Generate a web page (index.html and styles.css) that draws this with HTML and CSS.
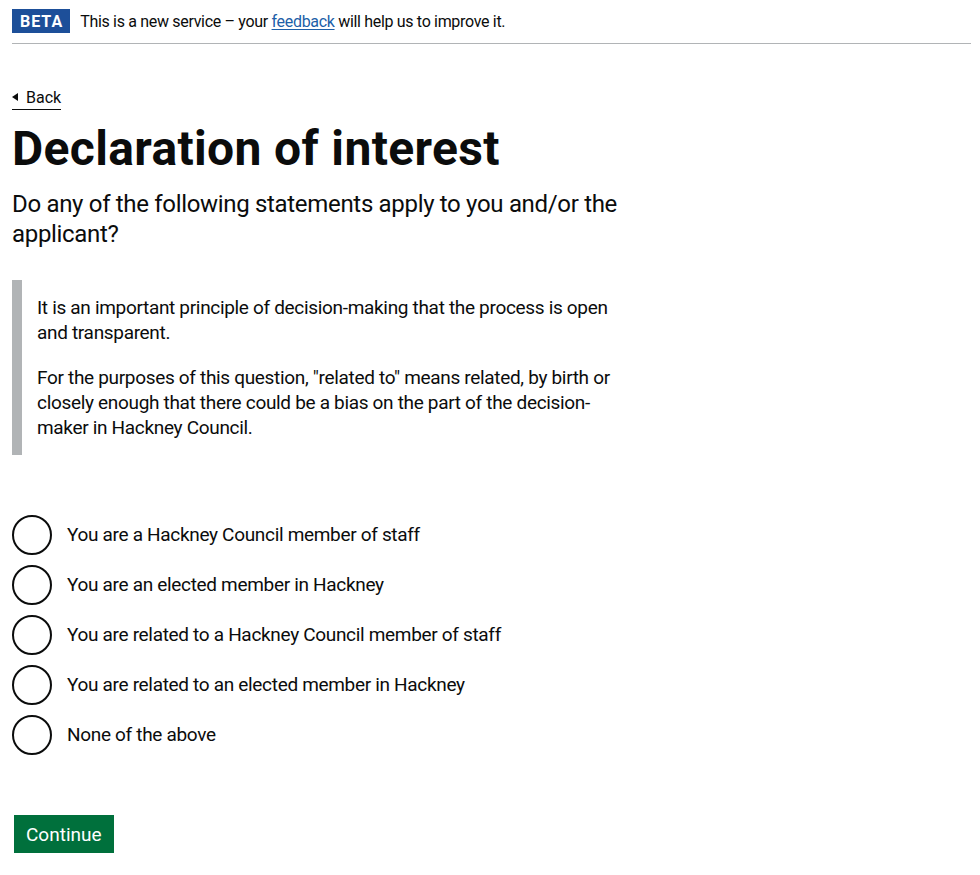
FILE: index.html
```html
<!DOCTYPE html>
<html lang="en">
<head>
<meta charset="utf-8">
<title>Declaration of interest</title>
<link rel="stylesheet" href="styles.css">
</head>
<body>
<div class="width-container">
  <div class="phase-banner">
    <strong class="tag">Beta</strong>
    <span class="phase-text">This is a new service – your <a href="#" class="link">feedback</a> will help us to improve it.</span>
  </div>
  <main class="main">
    <div class="back-row">
      <a href="#" class="back-link">Back</a>
    </div>
    <form class="form">
      <h1 class="heading-xl">Declaration of interest</h1>
      <p class="lead">Do any of the following statements apply to you and/or the applicant?</p>
      <div class="inset">
        <p class="body">It is an important principle of decision-making that the process is open and transparent.</p>
        <p class="body">For the purposes of this question, "related to" means related, by birth or closely enough that there could be a bias on the part of the decision-maker in Hackney Council.</p>
      </div>
      <div class="radios" role="radiogroup" aria-label="Declaration of interest">
        <div class="radio-item">
          <input class="radio-input" id="r1" name="declaration" type="radio">
          <label class="radio-label" for="r1">You are a Hackney Council member of staff</label>
        </div>
        <div class="radio-item">
          <input class="radio-input" id="r2" name="declaration" type="radio">
          <label class="radio-label" for="r2">You are an elected member in Hackney</label>
        </div>
        <div class="radio-item">
          <input class="radio-input" id="r3" name="declaration" type="radio">
          <label class="radio-label" for="r3">You are related to a Hackney Council member of staff</label>
        </div>
        <div class="radio-item">
          <input class="radio-input" id="r4" name="declaration" type="radio">
          <label class="radio-label" for="r4">You are related to an elected member in Hackney</label>
        </div>
        <div class="radio-item">
          <input class="radio-input" id="r5" name="declaration" type="radio">
          <label class="radio-label" for="r5">None of the above</label>
        </div>
      </div>
      <div class="button-row">
        <button type="button" class="button">Continue</button>
      </div>
    </form>
  </main>
</div>
</body>
</html>
```

FILE: styles.css
```css
html, body {
  margin: 0;
  padding: 0;
  background: #ffffff;
}

body {
  font-family: Roboto, "Liberation Sans", Arial, sans-serif;
  color: #0b0c0c;
  letter-spacing: -0.02em;
}

.width-container {
  margin: 0 9px 0 12px;
}

.phase-banner {
  display: flex;
  align-items: center;
  padding: 9px 0 10px;
  border-bottom: 1px solid #b1b4b6;
}

.tag {
  display: inline-block;
  padding: 3px 7px 1px 8px;
  margin-right: 10px;
  background: #1d4f99;
  color: #ffffff;
  font-size: 16px;
  line-height: 20px;
  font-weight: 700;
  letter-spacing: 1px;
  text-transform: uppercase;
}

.phase-text {
  font-size: 16px;
  line-height: 20px;
  padding-top: 2px;
}

.link {
  color: #1d5fa8;
  text-decoration: underline;
  text-underline-offset: 2px;
}

.main {
  padding-top: 44px;
}

.back-row {
  display: flex;
  margin-bottom: 14px;
}

.back-link {
  position: relative;
  padding: 0 0 1px 14px;
  font-size: 16px;
  line-height: 20px;
  letter-spacing: 0;
  color: #0b0c0c;
  text-decoration: none;
  border-bottom: 1px solid #0b0c0c;
}

.back-link::before {
  content: "";
  position: absolute;
  left: 0;
  top: 5px;
  border-style: solid;
  border-color: transparent #0b0c0c transparent transparent;
  border-width: 4.5px 6px 4.5px 0;
}

.form {
  margin: 0;
}

.heading-xl {
  margin: 0;
  font-size: 48px;
  line-height: 50px;
  font-weight: 700;
  letter-spacing: 0.35px;
}

.lead {
  margin: 15px 0 0;
  font-size: 24px;
  line-height: 30px;
  max-width: 630px;
}

.inset {
  margin: 31px 0 60px;
  padding: 15px;
  border-left: 10px solid #b1b4b6;
  max-width: 600px;
}

.body {
  margin: 0 0 20px;
  font-size: 19px;
  line-height: 25px;
}

.body:last-child {
  margin-bottom: 0;
}

.radios {
  display: flex;
  flex-direction: column;
  gap: 10px;
}

.radio-item {
  display: flex;
  align-items: flex-start;
  min-height: 40px;
}

.radio-input {
  appearance: none;
  -webkit-appearance: none;
  flex: 0 0 auto;
  width: 40px;
  height: 40px;
  margin: 0;
  border: 2px solid #0b0c0c;
  border-radius: 50%;
  background: transparent;
  box-sizing: border-box;
}

.radio-label {
  padding: 7px 15px 8px;
  font-size: 19px;
  line-height: 25px;
}

.button-row {
  display: flex;
  margin-top: 60px;
}

.button {
  margin: 0 0 0 2px;
  padding: 8px 10px 7px;
  border: 2px solid transparent;
  background: #00703c;
  color: #ffffff;
  font-family: inherit;
  font-size: 19px;
  line-height: 19px;
  letter-spacing: 0;
  border-radius: 0;
  box-shadow: 0 2px 0 #002d18;
  cursor: pointer;
}
```
